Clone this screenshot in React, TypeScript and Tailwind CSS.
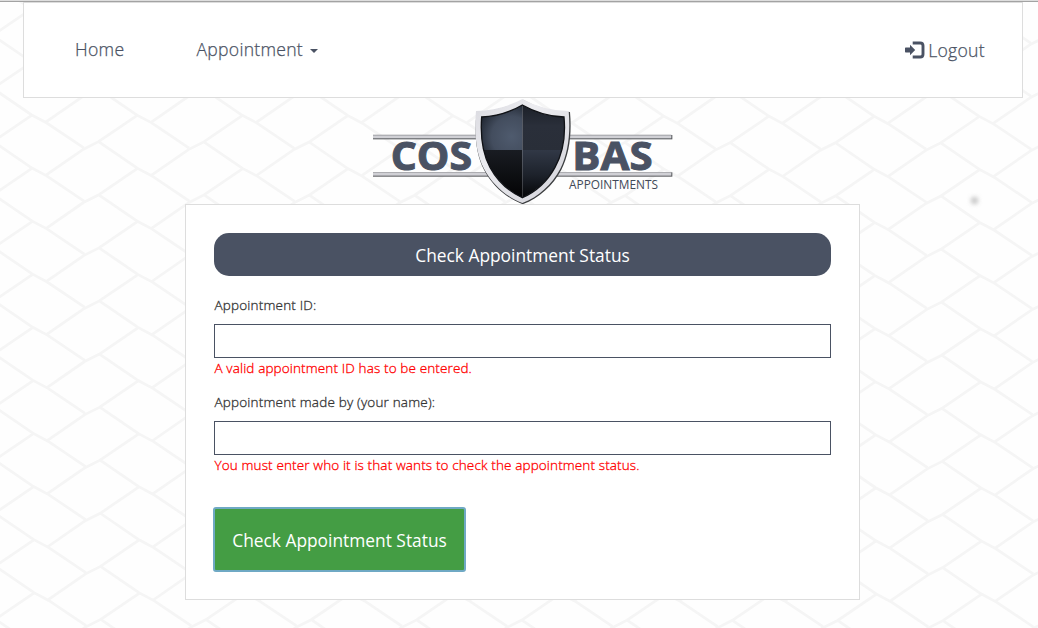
const courses = Array.from({ length: 14 }, (_, row) => row - 2);
const columns = Array.from({ length: 13 }, (_, col) => col - 2);

function Backdrop() {
  return (
    <svg className="absolute inset-0 -z-10" width="1038" height="628" viewBox="0 0 1038 628" fill="none" aria-hidden="true">
      <defs>
        <filter id="smudge" x="-100%" y="-100%" width="300%" height="300%">
          <feGaussianBlur stdDeviation="2" />
        </filter>
      </defs>
      <g stroke="#f5f5f5" strokeWidth="2.7">
        {courses.map((row) =>
          columns.map((col) => (
            <path
              key={`${row}:${col}`}
              transform={`translate(${98.3 + col * 105.27 + row * 0.25} ${141.7 + col * 0.15 + (row - 1) * 53.08})`}
              d="M0 0L38.7 26.5L53.4 34.3L90.8 59.5M-52.6 33.5L-15 7.5L0 0L38.7 -26.4"
            />
          )),
        )}
      </g>
      <circle cx="974.5" cy="200.5" r="3.8" fill="#c8c8c8" filter="url(#smudge)" />
    </svg>
  );
}

function LogoutIcon() {
  return (
    <svg width="20" height="18" viewBox="0 0 20 18" aria-hidden="true">
      <path d="M7.7 2H15.2Q18 2 18 4.8V13.2Q18 16 15.2 16H7.7" fill="none" stroke="#4a5263" strokeWidth="2.9" />
      <path d="M0.7 6.6H5V3.8L10.2 9L5 14.2V11.4H0.7Q0 11.4 0 10.7V7.3Q0 6.6 0.7 6.6Z" fill="#4a5263" />
    </svg>
  );
}

function Logo() {
  return (
    <svg className="block overflow-visible" width="320" height="106" viewBox="-6 9 960 318" role="img" aria-label="COSBAS Appointments">
      <defs>
        <linearGradient id="silver" x1="0" y1="0" x2="1" y2="1">
          <stop offset="0" stopColor="#d9d9df" />
          <stop offset=".35" stopColor="#ececf0" />
          <stop offset="1" stopColor="#d2d2d9" />
        </linearGradient>
        <radialGradient id="steel" gradientUnits="userSpaceOnUse" cx="440" cy="125" r="110">
          <stop offset="0" stopColor="#4f5b6e" />
          <stop offset=".55" stopColor="#434d5e" />
          <stop offset="1" stopColor="#1d232d" />
        </radialGradient>
        <linearGradient id="slate" x1="0" y1="0" x2="0" y2="1">
          <stop offset="0" stopColor="#191d25" />
          <stop offset=".5" stopColor="#2a2f3a" />
          <stop offset="1" stopColor="#292e38" />
        </linearGradient>
        <linearGradient id="coal" x1="0" y1="0" x2="0" y2="1">
          <stop offset="0" stopColor="#191c22" />
          <stop offset="1" stopColor="#020203" />
        </linearGradient>
        <linearGradient id="dusk" x1="0" y1="0" x2="0" y2="1">
          <stop offset="0" stopColor="#313846" />
          <stop offset=".5" stopColor="#1d222b" />
          <stop offset="1" stopColor="#030304" />
        </linearGradient>
        <clipPath id="face">
          <path d="M472 30Q532 64 597 66C602 120 594 174 570 217C548 257 513 290 472 308C432 290 397 257 375 217C352 174 346 120 350 66Q414 64 472 30Z" />
        </clipPath>
      </defs>
      {[120, 232].map((y) => (
        <g key={y}>
          <rect x="24" y={y} width="898" height="13" fill="#55575a" />
          <rect x="24" y={y - 1} width="895" height="2" fill="#a5a5a9" />
          <rect x="24" y={y + 1} width="895" height="9" fill="#d0d0d5" />
        </g>
      ))}
      <g fill="#4a5263" stroke="#4a5263" strokeWidth="3" fontFamily="'Open Sans', sans-serif" fontWeight="700" fontSize="119">
        <text x="77" y="226" textLength="244" lengthAdjust="spacingAndGlyphs">COS</text>
        <text x="622" y="226" textLength="241" lengthAdjust="spacingAndGlyphs">BAS</text>
      </g>
      <text x="612" y="281" textLength="267" lengthAdjust="spacingAndGlyphs" fill="#414957" fontFamily="'Open Sans', sans-serif" fontSize="36">APPOINTMENTS</text>
      <path d="M474 14Q536 50 615 51C621 118 613 178 589 224C564 271 523 309 473 328C424 309 382 272 357 224C333 178 327 118 335 50Q410 48 474 14Z" fill="#3c3e40" />
      <path d="M472 12Q534 47 611 48C617 115 609 176 586 221C561 268 520 306 472 324C424 306 382 268 357 221C333 176 327 115 333 48Q410 46 472 12Z" fill="url(#silver)" />
      <g clipPath="url(#face)">
        <rect x="340" y="20" width="132" height="145" fill="url(#steel)" />
        <rect x="472" y="20" width="132" height="145" fill="url(#slate)" />
        <rect x="340" y="165" width="132" height="150" fill="url(#coal)" />
        <rect x="472" y="165" width="132" height="150" fill="url(#dusk)" />
      </g>
      <path d="M472 30Q532 64 597 66C602 120 594 174 570 217C548 257 513 290 472 308C432 290 397 257 375 217C352 174 346 120 350 66Q414 64 472 30Z" fill="none" stroke="#101216" strokeWidth="4" />
    </svg>
  );
}

function Field({ id, label, error }: { id: string; label: string; error: string }) {
  return (
    <div className="h-[97px]">
      <label htmlFor={id} className="block h-[29px] pl-[0.5px] text-[13.5px] leading-5 font-light tracking-[0.19px] text-[#333] [-webkit-text-stroke:0.3px]">
        {label}
      </label>
      <input id={id} className="block h-[34px] w-full border border-[#4a5263] bg-white px-3 outline-none" />
      <p className="pl-[0.5px] text-[13.5px] leading-[21px] font-light tracking-[0.13px] whitespace-nowrap text-[#ff0000] [-webkit-text-stroke:0.3px]">{error}</p>
    </div>
  );
}

export default function App() {
  return (
    <div className="relative isolate h-[628px] w-[1038px] overflow-hidden bg-[#fefefe] font-['Open_Sans',sans-serif]">
      <Backdrop />
      <div className="h-[2px] border-b border-[#a3a3a3] bg-[#dedede]" />
      <div className="ml-[23px] flex w-[1000px] flex-col items-center">
        <nav className="flex h-24 w-full items-center border border-[#ddd] bg-white pr-[37px] pb-px pl-[51px] text-[17.6px] font-light text-[#4a5263] [-webkit-text-stroke:0.25px]">
          <a className="w-[121.5px] tracking-[0.3px]">Home</a>
          <a className="flex items-center gap-[7px] tracking-[0.27px]">
            Appointment
            <svg className="mt-[3px]" width="8" height="4" viewBox="0 0 8 4" aria-hidden="true">
              <path d="M0 0H8L4 4Z" fill="#4a5263" />
            </svg>
          </a>
          <a className="ml-auto flex items-center gap-[3px] pt-0.5 tracking-[0.3px]">
            <LogoutIcon />
            Logout
          </a>
        </nav>
        <Logo />
        <main className="mr-px h-[396px] w-[675px] border border-[#ddd] bg-white px-7 pt-7">
          <h1 className="flex h-[43px] items-center justify-center rounded-[15px] bg-[#4a5263] pt-0.5 text-[17.35px] text-white">
            Check Appointment Status
          </h1>
          <form className="pt-[19px]">
            <Field id="appointment-id" label="Appointment ID:" error="A valid appointment ID has to be entered." />
            <Field
              id="made-by"
              label="Appointment made by (your name):"
              error="You must enter who it is that wants to check the appointment status."
            />
            <button
              type="button"
              className="-ml-px mt-[18px] flex h-[65px] w-[253px] items-center justify-center rounded-[3px] border-2 border-[#6fa9c4] bg-[#449d44] pt-0.5 text-[17.35px] whitespace-nowrap text-white"
            >
              Check Appointment Status
            </button>
          </form>
        </main>
      </div>
    </div>
  );
}
